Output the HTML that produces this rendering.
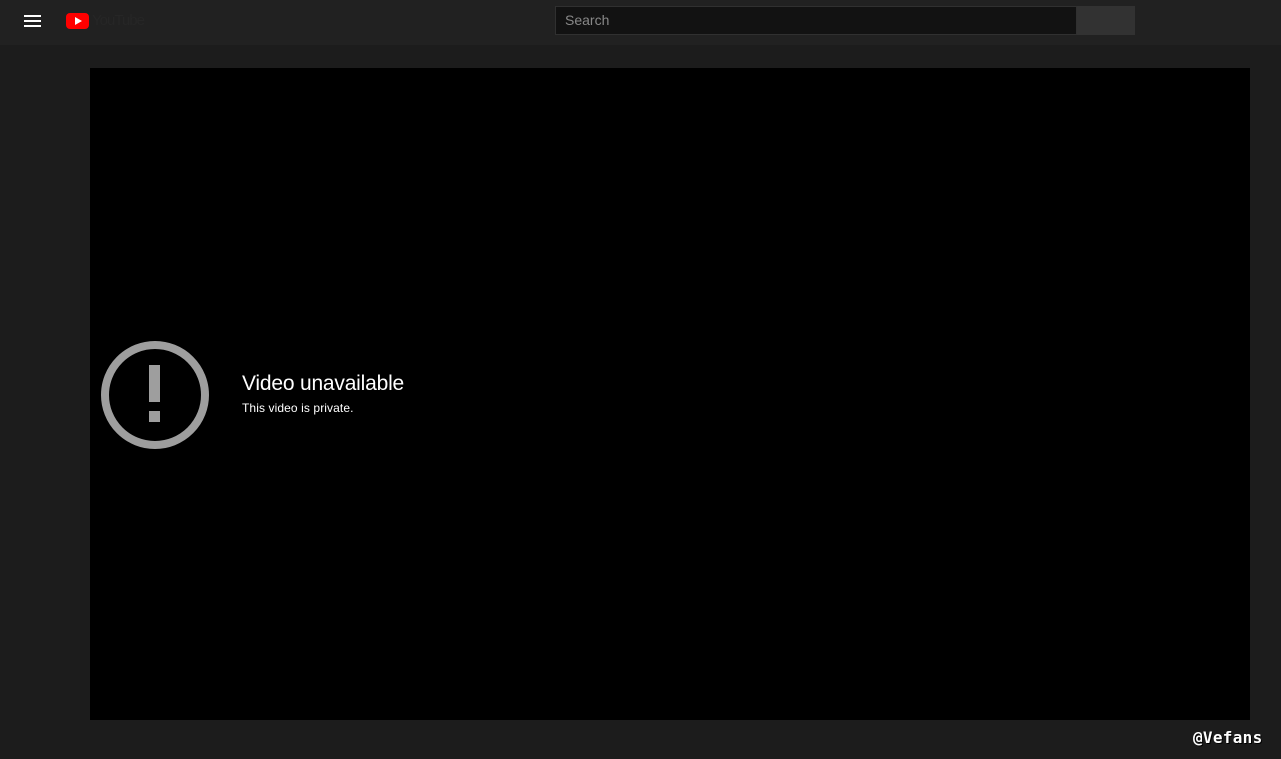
<!DOCTYPE html>
<html><head><style>
body{margin:0;width:1281px;height:759px;background:#1c1c1c;font-family:"Liberation Sans",sans-serif;position:relative;overflow:hidden}
.top{position:absolute;left:0;top:0;width:1281px;height:45px;background:#212121}
.ham{position:absolute;left:24px;top:15px;width:17px}
.ham div{height:2px;background:#fff;margin-bottom:3px}
.logo{position:absolute;left:66px;top:13px;width:23px;height:16px;background:#f00;border-radius:4px}
.logo:after{content:"";position:absolute;left:9px;top:4px;border-left:7px solid #fff;border-top:4px solid transparent;border-bottom:4px solid transparent}
.yt{position:absolute;left:92px;top:12px;color:#262626;font-size:15px;letter-spacing:-1px}
.search{position:absolute;left:555px;top:6px;width:522px;height:29px;background:#121212;border:1px solid #303030;box-sizing:border-box;color:#888;font-size:14px;padding:5px 9px}
.btn{position:absolute;left:1077px;top:6px;width:58px;height:29px;background:#323232}
.video{position:absolute;left:90px;top:68px;width:1160px;height:652px;background:#000}
.t1{position:absolute;left:242px;top:372px;color:#fff;font-size:21px;letter-spacing:-0.2px}
.t2{position:absolute;left:242px;top:401px;color:#fff;font-size:12px;letter-spacing:0.1px}
.wm{position:absolute;left:1193px;top:728px;color:#fff;font-family:"DejaVu Sans Mono",monospace;font-size:16px;font-weight:bold;letter-spacing:0.3px;text-shadow:1px 1px 0 #000}
</style></head><body>
<div class="top"><div class="ham"><div></div><div></div><div></div></div><div class="logo"></div><div class="yt">YouTube</div>
<div class="search">Search</div><div class="btn"></div></div>
<div class="video"></div>
<svg style="position:absolute;left:100px;top:340px" width="110" height="110"><circle cx="55" cy="55" r="50" fill="none" stroke="#9e9e9e" stroke-width="8"/><rect x="49" y="25" width="11" height="37" fill="#9e9e9e"/><rect x="49" y="71" width="11" height="11" fill="#9e9e9e"/></svg>
<div class="t1">Video unavailable</div><div class="t2">This video is private.</div>
<div class="wm">@Vefans</div>
</body></html>
